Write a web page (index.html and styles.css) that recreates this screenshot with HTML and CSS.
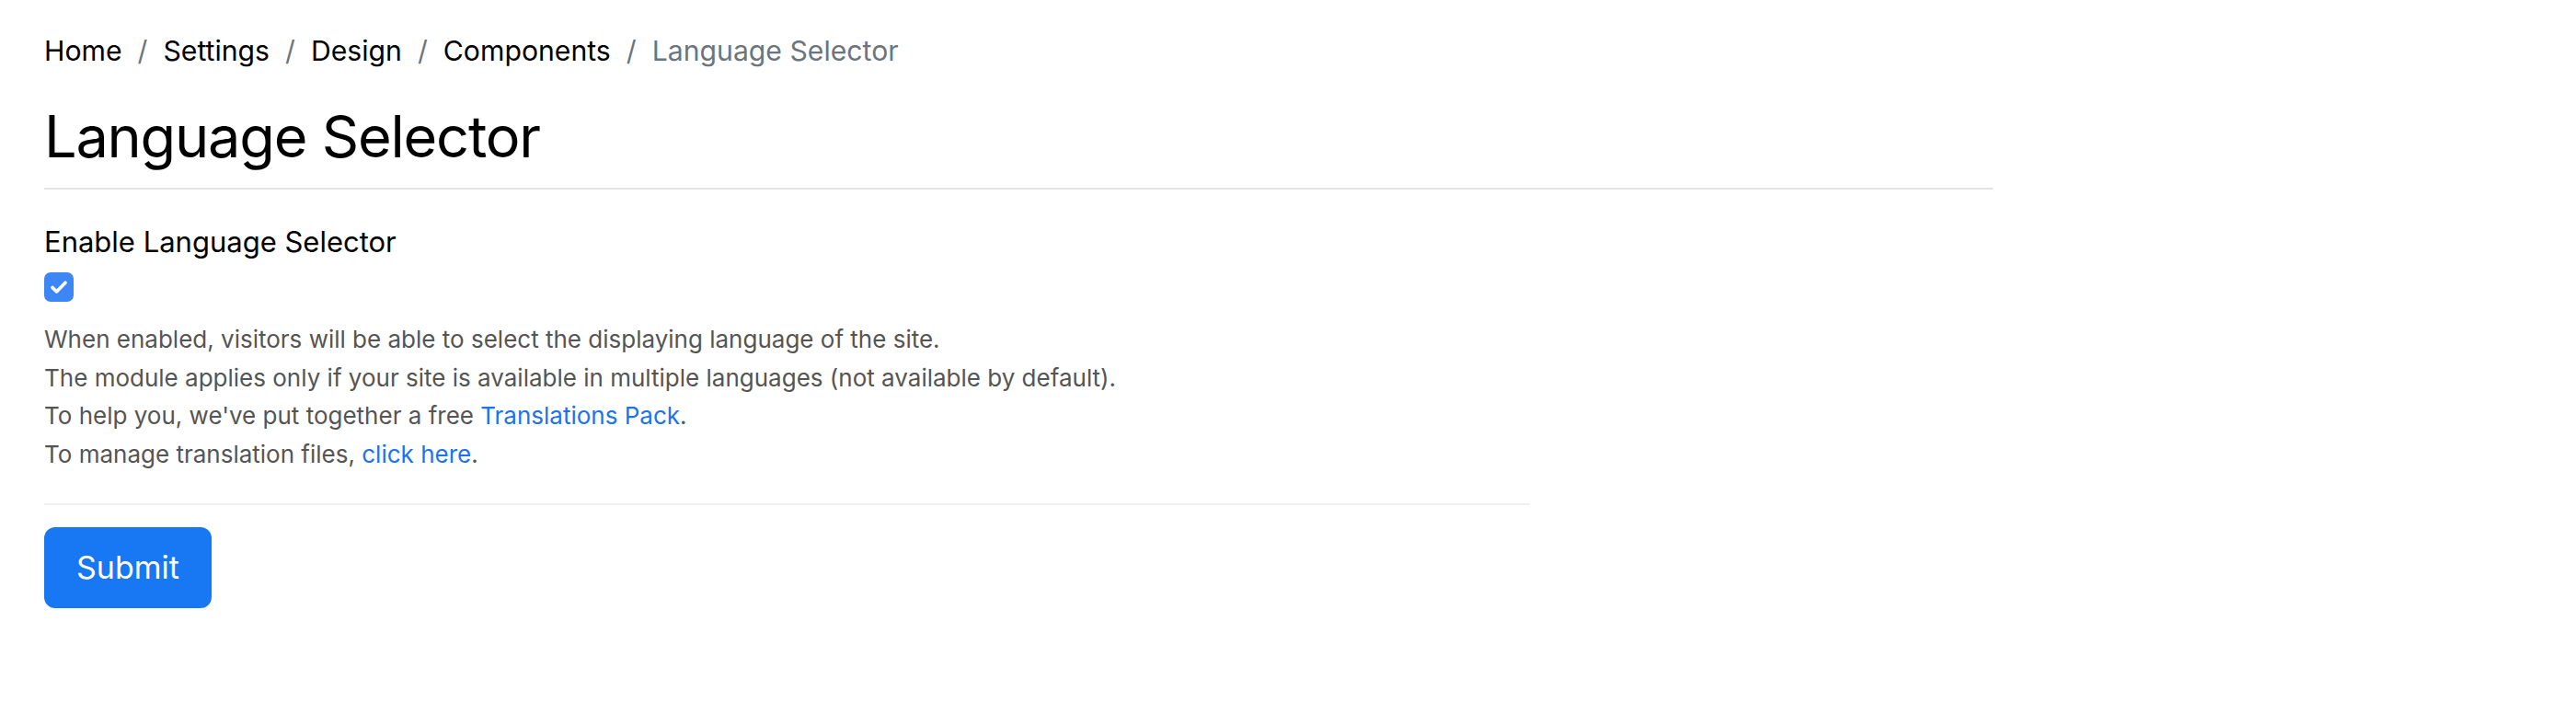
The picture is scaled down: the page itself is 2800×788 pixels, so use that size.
FILE: index.html
```html
<!DOCTYPE html>
<html lang="en">
<head>
    <meta charset="UTF-8">
    <meta name="viewport" content="width=device-width, initial-scale=1.0">
    <title>Language Selector</title>
    <link rel="stylesheet" href="styles.css">
</head>
<body>
    <div class="page">
        <nav class="breadcrumb">
            <a href="#">Home</a>
            <span class="sep">/</span>
            <a href="#">Settings</a>
            <span class="sep">/</span>
            <a href="#">Design</a>
            <span class="sep">/</span>
            <a href="#">Components</a>
            <span class="sep">/</span>
            <span class="current">Language Selector</span>
        </nav>

        <h1 class="title">Language Selector</h1>

        <form class="settings-form">
            <label class="field-label" for="enableSelector">Enable Language Selector</label>
            <label class="check">
                <input type="checkbox" id="enableSelector" checked>
                <span class="check-box">
                    <svg viewBox="0 0 16 16" width="26" height="26">
                        <path d="M3.7 8.3l2.8 2.8 5.8-6" fill="none" stroke="#fff" stroke-width="2.3" stroke-linecap="round" stroke-linejoin="round"/>
                    </svg>
                </span>
            </label>
            <div class="help">
                <p>When enabled, visitors will be able to select the displaying language of the site.</p>
                <p>The module applies only if your site is available in multiple languages (not available by default).</p>
                <p>To help you, we've put together a free <a href="#">Translations Pack</a>.</p>
                <p>To manage translation files, <a href="#">click here</a>.</p>
            </div>
            <div class="form-actions">
                <button type="submit" class="btn-submit">Submit</button>
            </div>
        </form>
    </div>
</body>
</html>
```

FILE: styles.css
```css
* {
    margin: 0;
    padding: 0;
    box-sizing: border-box;
}

body {
    font-family: 'Inter', 'Noto Sans', sans-serif;
    background: #fff;
    color: #000;
}

.page {
    padding: 34px 48px 0;
    width: 2214px;
}

.breadcrumb {
    display: flex;
    align-items: center;
    gap: 17px;
    font-size: 30.2px;
    line-height: 42px;
}

.breadcrumb a {
    color: #000;
    text-decoration: none;
}

.breadcrumb .sep {
    color: #6c757d;
}

.breadcrumb .current {
    color: #6c757d;
}

.title {
    font-size: 63px;
    font-weight: 400;
    letter-spacing: -1.2px;
    line-height: 80px;
    margin-top: 32px;
    padding-bottom: 16px;
    border-bottom: 2px solid #e3e3e3;
}

.settings-form {
    width: 1615px;
    padding-top: 36px;
}

.field-label {
    display: block;
    font-size: 31px;
    line-height: 42px;
}

.check {
    display: block;
    margin-top: 12px;
    width: 32px;
    height: 32px;
}

.check input {
    display: none;
}

.check-box {
    display: flex;
    align-items: center;
    justify-content: center;
    width: 32px;
    height: 32px;
    border-radius: 7px;
    background: #3d86f5;
}

.help {
    margin-top: 20px;
    color: #555;
    font-size: 26px;
    line-height: 41.7px;
}

.help a {
    color: #1a73f0;
    text-decoration: none;
}

.form-actions {
    margin-top: 32px;
    padding-top: 24px;
    border-top: 2px solid #f0f0f0;
}

.btn-submit {
    font-family: inherit;
    font-size: 34px;
    line-height: 40px;
    color: #fff;
    background: #1877f2;
    border: none;
    border-radius: 12px;
    padding: 24px 35px;
    cursor: pointer;
}
```
